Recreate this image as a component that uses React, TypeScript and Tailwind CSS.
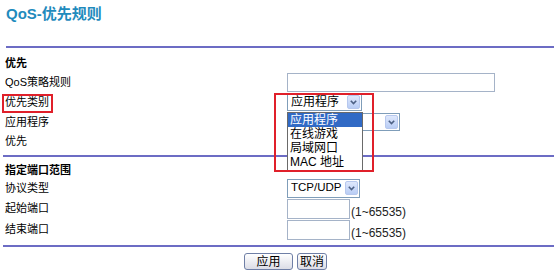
import React from "react";

const font = { fontFamily: '"Liberation Sans", Arial, "Noto Sans CJK SC", sans-serif' };

function Chevron() {
  return (
    <span className="flex h-[14px] w-[13px] shrink-0 items-center justify-center rounded-[2px] border border-[#b7c8ee] bg-gradient-to-b from-[#dfe8fc] to-[#b9cdf5]">
      <svg width="7" height="5" viewBox="0 0 7 5">
        <path d="M0.8 0.8 L3.5 3.6 L6.2 0.8" fill="none" stroke="#4d6185" strokeWidth="1.6" />
      </svg>
    </span>
  );
}

function Select({ value, width, height, size = "text-[12px]" }: { value: string; width: string; height: string; size?: string }) {
  return (
    <div className={`flex items-center justify-between border border-[#7f9db9] bg-white pl-[3px] pr-[1px] ${width} ${height}`}>
      <span className={`${size} leading-none text-black`}>{value}</span>
      <Chevron />
    </div>
  );
}

function Row({ label, bold, h, children }: { label: string; bold?: boolean; h: string; children?: React.ReactNode }) {
  return (
    <div className={`flex items-center ${h}`}>
      <div className={`w-[282px] text-[11px] leading-none text-black ${bold ? "font-bold" : ""}`}>{label}</div>
      <div className="flex items-center">{children}</div>
    </div>
  );
}

function Line({ ml }: { ml: string }) {
  return <div className={`h-[2px] bg-[#6c6cc4] ${ml}`} />;
}

function Range() {
  return <span className="ml-[1px] text-[12px] leading-[14px] text-[#222]">(1~65535)</span>;
}

export default function App() {
  return (
    <div className="relative h-[279px] w-[554px] overflow-hidden bg-white" style={font}>
      <div className="h-[46px] pl-[6px] pt-[5px]">
        <h1 className="text-[15px] font-bold leading-[18px] text-[#1f8bbd]">QoS-优先规则</h1>
      </div>
      <Line ml="ml-[6px]" />

      <div className="pl-[5px] pt-[6px]">
        <Row label="优先" bold h="h-[18px]" />
        <Row label="QoS策略规则" h="h-[20px]">
          <div className="h-[19px] w-[208px] border border-[#a5b3c8] bg-white" />
        </Row>
        <Row label="优先类别" h="h-[20px]">
          <Select value="应用程序" width="w-[75px]" height="h-[18px]" />
        </Row>
        <Row label="应用程序" h="h-[20px]">
          <Select value="" width="w-[113px]" height="h-[18px]" />
        </Row>
        <Row label="优先" h="h-[18px]" />
      </div>
      <div className="mt-[5px]">
        <Line ml="ml-[3px]" />
      </div>

      <div className="pl-[5px] pt-[5px]">
        <Row label="指定端口范围" bold h="h-[16px]" />
        <Row label="协议类型" h="h-[20px]">
          <Select value="TCP/UDP" width="w-[73px]" height="h-[19px]" size="text-[11.5px]" />
        </Row>
        <Row label="起始端口" h="h-[21px]">
          <div className="flex items-end">
            <div className="h-[20px] w-[63px] border border-[#a5b3c8] bg-white" />
            <Range />
          </div>
        </Row>
        <Row label="结束端口" h="h-[21px]">
          <div className="flex items-end">
            <div className="h-[20px] w-[63px] border border-[#a5b3c8] bg-white" />
            <Range />
          </div>
        </Row>
      </div>
      <div className="mt-[5px]">
        <Line ml="ml-[3px]" />
      </div>

      <div className="flex gap-[4px] pl-[244px] pt-[6px]">
        <button className="h-[17px] w-[49px] rounded-[3px] border border-[#6f7fa6] bg-gradient-to-b from-white to-[#dcdde6] text-[12px] leading-none text-black">
          应用
        </button>
        <button className="h-[17px] w-[30px] rounded-[3px] border border-[#6f7fa6] bg-gradient-to-b from-white to-[#dcdde6] text-[12px] leading-none text-black">
          取消
        </button>
      </div>

      {/* open dropdown list */}
      <div className="absolute left-[287px] top-[112px] w-[76px] border border-[#6a6a6a] bg-white text-[12px] text-black">
        <div className="h-[14px] bg-[#316ac5] pl-[2px] leading-[14px] text-white">应用程序</div>
        <div className="h-[14px] pl-[2px] leading-[14px]">在线游戏</div>
        <div className="h-[14px] pl-[2px] leading-[14px]">局域网口</div>
        <div className="h-[15px] pl-[2px] leading-[15px]">MAC 地址</div>
      </div>

      {/* annotation boxes */}
      <div className="absolute left-[2px] top-[94px] h-[19px] w-[51px] border-2 border-[#e0202a]" />
      <div className="absolute left-[274px] top-[93px] h-[79px] w-[100px] border-2 border-[#e0202a]" />
    </div>
  );
}
